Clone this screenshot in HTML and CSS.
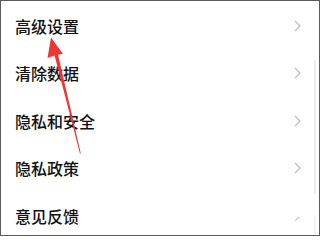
FILE: index.html
```html
<!DOCTYPE html>
<html lang="zh-CN">
<head>
<meta charset="utf-8">
<link rel="stylesheet" href="styles.css">
</head>
<body>
<div class="frame">
  <ul class="list">
    <li class="row"><span class="label">高级设置</span><svg class="chev" viewBox="0 0 7 12"><polyline points="1,1 6,6 1,11"/></svg></li>
    <li class="row"><span class="label">清除数据</span><svg class="chev" viewBox="0 0 7 12"><polyline points="1,1 6,6 1,11"/></svg></li>
    <li class="row"><span class="label">隐私和安全</span><svg class="chev" viewBox="0 0 7 12"><polyline points="1,1 6,6 1,11"/></svg></li>
    <li class="row"><span class="label">隐私政策</span><svg class="chev" viewBox="0 0 7 12"><polyline points="1,1 6,6 1,11"/></svg></li>
    <li class="row"><span class="label">意见反馈</span><svg class="chev chev-partial" viewBox="0 0 7 12"><polyline points="5,7 1,11"/></svg></li>
  </ul>
  <div class="scrollbar"></div>
  <div class="scrollbar-low"></div>
  <svg class="arrow" viewBox="0 0 318 234" width="318" height="234">
    <polygon points="50,36.5 62,53 57,53.6 79.8,152.5 79,152.7 53.6,54.6 46.5,57"/>
  </svg>
</div>
</body>
</html>
```

FILE: styles.css
```css
html, body {
  margin: 0;
  padding: 0;
  background: #ffffff;
}
body {
  width: 320px;
  height: 237px;
  overflow: hidden;
  font-family: "Noto Sans CJK SC", "Noto Sans", sans-serif;
}
.frame {
  position: relative;
  box-sizing: border-box;
  width: 320px;
  height: 236px;
  border: 1px solid #5c5c5c;
  background: #ffffff;
  overflow: hidden;
}
.list {
  list-style: none;
  margin: 0;
  padding: 1px 0 0 0;
}
.row {
  display: flex;
  align-items: center;
  justify-content: space-between;
  height: 47.5px;
  padding: 0 18px 0 14px;
}
.label {
  font-size: 16px;
  font-weight: 500;
  color: #111111;
  line-height: 1;
}
.chev {
  width: 7px;
  height: 12px;
  fill: none;
  stroke: #bdbdbd;
  stroke-width: 1.2;
}
.chev-partial {
  stroke: #cfcfcf;
}
.scrollbar {
  position: absolute;
  left: 313px;
  top: 59px;
  width: 2px;
  height: 134px;
  background: #ececec;
}
.scrollbar-low {
  position: absolute;
  left: 313px;
  top: 214px;
  width: 2px;
  height: 20px;
  background: #f2f2f2;
}
.arrow {
  position: absolute;
  left: 0;
  top: 0;
  fill: #f03434;
}
```
